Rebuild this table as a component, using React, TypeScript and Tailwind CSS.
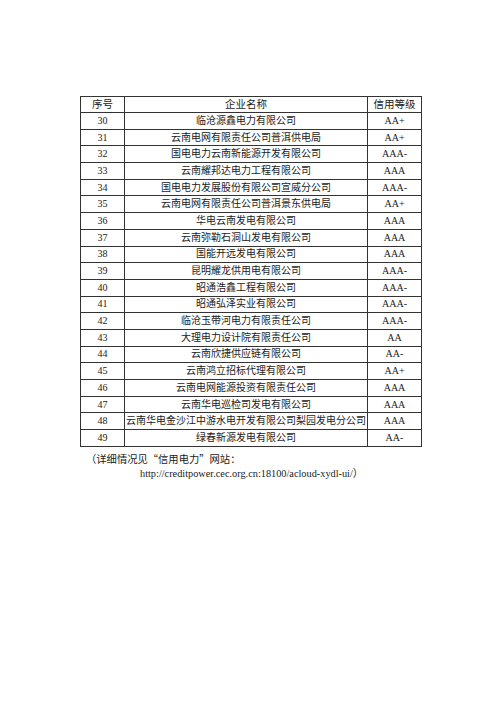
import React from "react"

const rows: [string, string, string][] = [
  ["30", "临沧源鑫电力有限公司", "AA+"],
  ["31", "云南电网有限责任公司普洱供电局", "AA+"],
  ["32", "国电电力云南新能源开发有限公司", "AAA-"],
  ["33", "云南耀邦达电力工程有限公司", "AAA"],
  ["34", "国电电力发展股份有限公司宣威分公司", "AAA-"],
  ["35", "云南电网有限责任公司普洱景东供电局", "AA+"],
  ["36", "华电云南发电有限公司", "AAA"],
  ["37", "云南弥勒石洞山发电有限公司", "AAA"],
  ["38", "国能开远发电有限公司", "AAA"],
  ["39", "昆明耀龙供用电有限公司", "AAA-"],
  ["40", "昭通浩鑫工程有限公司", "AAA-"],
  ["41", "昭通弘泽实业有限公司", "AAA-"],
  ["42", "临沧玉带河电力有限责任公司", "AAA-"],
  ["43", "大理电力设计院有限责任公司", "AA"],
  ["44", "云南欣捷供应链有限公司", "AA-"],
  ["45", "云南鸿立招标代理有限公司", "AA+"],
  ["46", "云南电网能源投资有限责任公司", "AAA"],
  ["47", "云南华电巡检司发电有限公司", "AAA"],
  ["48", "云南华电金沙江中游水电开发有限公司梨园发电分公司", "AAA"],
  ["49", "绿春新源发电有限公司", "AA-"],
]

export default function App() {
  return (
    <div className="h-[707px] w-[500px] bg-white pl-[80px] pt-[96px] text-[#1a1a1a]">
      <table className="w-[341px] table-fixed border-collapse font-['Liberation_Serif','Noto_Sans_CJK_SC',serif] text-[10px]">
        <colgroup>
          <col className="w-[44px]" />
          <col className="w-[243px]" />
          <col className="w-[54px]" />
        </colgroup>
        <thead>
          <tr className="h-[16px] font-['Noto_Sans_CJK_SC',sans-serif] text-[10.5px] font-normal">
            <th className="border border-[#333] p-0 font-normal leading-none">序号</th>
            <th className="border border-[#333] p-0 font-normal leading-none">企业名称</th>
            <th className="border border-[#333] p-0 font-normal leading-none">信用等级</th>
          </tr>
        </thead>
        <tbody>
          {rows.map(([no, name, level]) => (
            <tr key={no} className="h-[16.7px]">
              <td className="border border-[#333] p-0 text-center leading-none">{no}</td>
              <td className="whitespace-nowrap border border-[#333] p-0 text-center leading-none">{name}</td>
              <td className="border border-[#333] p-0 text-center leading-none">{level}</td>
            </tr>
          ))}
        </tbody>
      </table>
      <div className="mt-[4px] text-[10.3px] leading-[15px]">
        <p className="pl-[6px] font-['Noto_Sans_CJK_SC',serif]">（详细情况见“信用电力”网站：</p>
        <p className="pl-[60px] font-['Liberation_Serif','Noto_Sans_CJK_SC',serif]">
          http://creditpower.cec.org.cn:18100/acloud-xydl-ui/）
        </p>
      </div>
    </div>
  )
}
